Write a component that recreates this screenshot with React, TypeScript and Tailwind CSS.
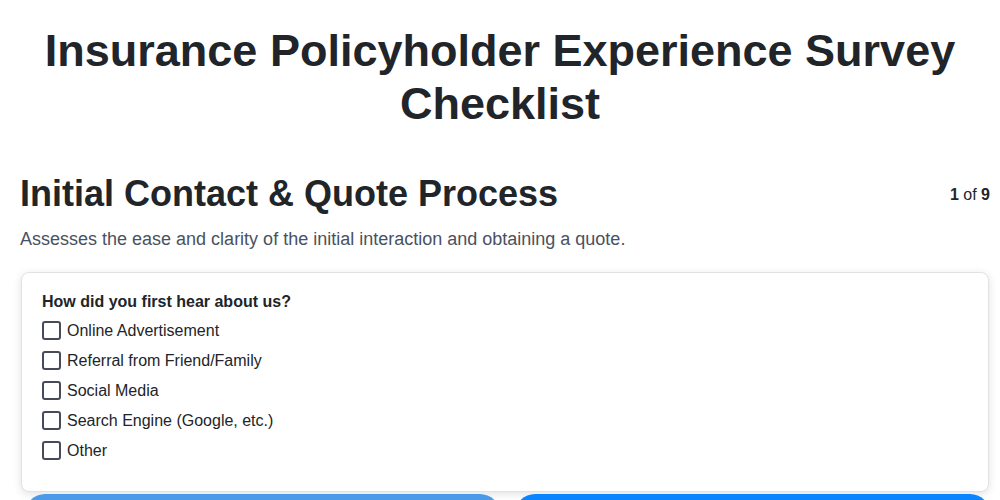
const options = [
  "Online Advertisement",
  "Referral from Friend/Family",
  "Social Media",
  "Search Engine (Google, etc.)",
  "Other",
]

export default function App() {
  return (
    <div className="min-h-screen bg-white pl-5 pr-[10px] pt-6 font-['Liberation_Sans',Arial,sans-serif] text-[#212529]">
      <h1 className="pr-[10px] text-center text-[45px] font-bold leading-[53px]">
        Insurance Policyholder Experience Survey Checklist
      </h1>

      <div className="mt-[42px] flex items-start justify-between">
        <h2 className="text-[36px] font-bold leading-[44px]">Initial Contact &amp; Quote Process</h2>
        <div className="mt-[11px] text-base">
          <span className="font-bold">1</span> of <span className="font-bold">9</span>
        </div>
      </div>
      <p className="mt-[10px] text-[18px] leading-[27px] text-[#4a5160]">
        Assesses the ease and clarity of the initial interaction and obtaining a quote.
      </p>

      <div className="mx-px mt-[19px] rounded-lg border border-[#e2e2e6] bg-white px-5 pt-[17px] pb-[31px] shadow-[0_2px_8px_rgba(0,0,0,0.12)]">
        <div className="text-base font-bold">How did you first hear about us?</div>
        <div className="mt-[7px] flex flex-col gap-[11px]">
          {options.map((o) => (
            <label key={o} className="flex items-center gap-[6px] text-base leading-[18px]">
              <span className="h-[19px] w-[19px] rounded-[3px] border-2 border-[#474a5a] bg-white" />
              {o}
            </label>
          ))}
        </div>
      </div>

      <div className="mt-[2px] flex gap-[15px] pl-[5px]">
        <button className="h-10 flex-1 rounded-full bg-[#4a9ae9]" />
        <button className="h-10 flex-1 rounded-full bg-[#0a84ff]" />
      </div>
    </div>
  )
}
